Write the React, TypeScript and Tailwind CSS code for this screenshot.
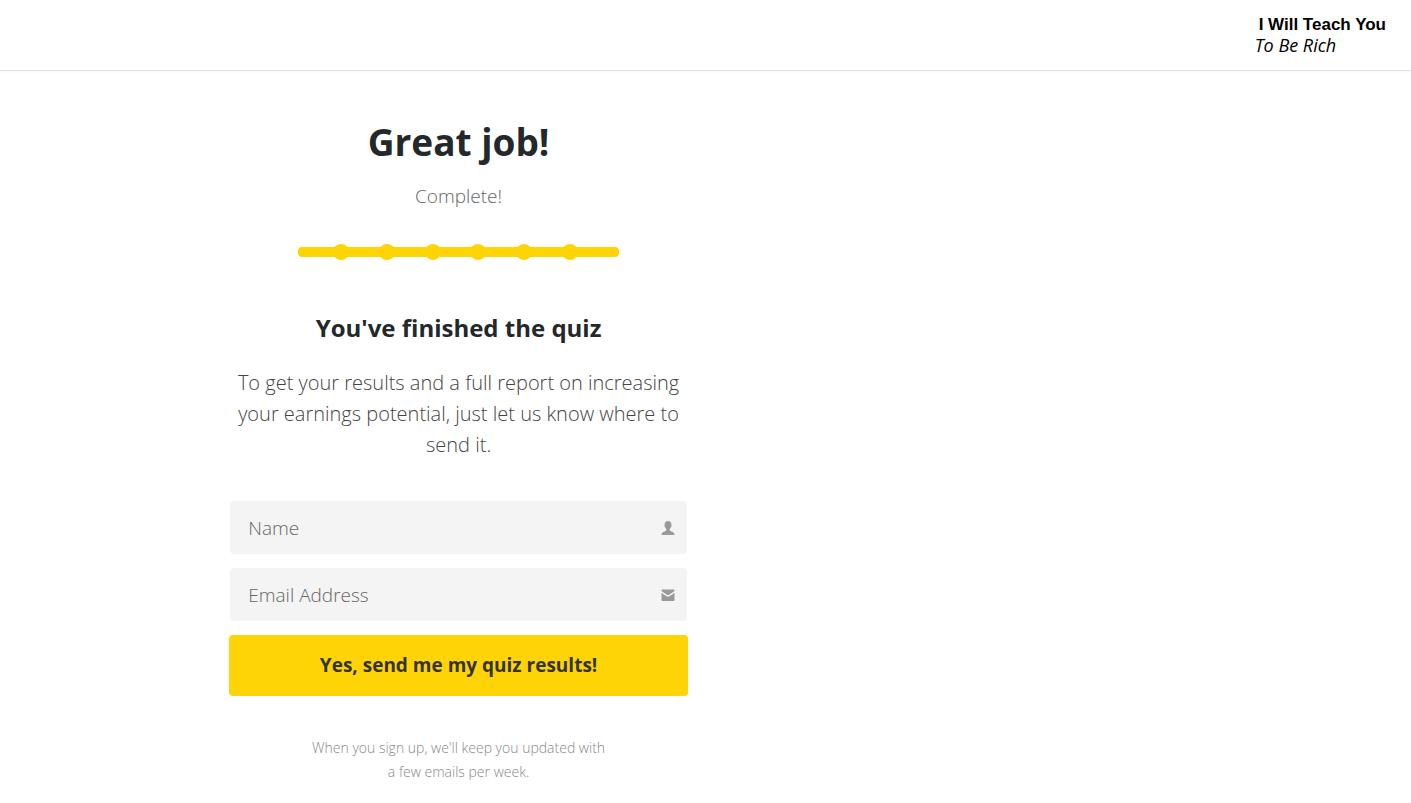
import { useState } from "react";

const steps = [1, 2, 3, 4, 5, 6, 7];

function UserIcon() {
  return (
    <svg viewBox="0 0 14 14" className="h-3.5 w-3.5" fill="#999999" aria-hidden="true">
      <path d="M7 0C4.900 0 3.600 1.400 3.600 3.400c0 .5 0 .7.1 1-.4.2-.3 1.200.3 1.500.3 1 .7 1.700 1.300 2.200v1.200c-.3.8-1.300 1-2.400 1.400C1.400 11.300.6 11.900.5 14h13c-.1-2.100-.9-2.700-2.400-3.300-1.100-.4-2.100-.6-2.400-1.400V8.100c.6-.5 1-1.200 1.300-2.200.6-.3.700-1.300.3-1.500.1-.3.1-.5.1-1C10.400 1.400 9.100 0 7 0z" />
    </svg>
  );
}

function MailIcon() {
  return (
    <svg viewBox="0 0 14 14" className="h-3.5 w-3.5" aria-hidden="true">
      <rect x="0.5" y="1.500" width="13" height="11.500" rx="1" fill="#999999" />
      <path d="M0 3.700L5.900 7.600Q7 8.300 8.100 7.600L14 3.700" fill="none" stroke="#f4f4f4" strokeWidth="1.500" />
    </svg>
  );
}

function Header() {
  return (
    <header className="flex h-[71px] items-start justify-end border-b border-[#e3e3e3] px-[25px] pt-[15px] shadow-xs">
      <a href="#" className="flex flex-col text-black">
        <span className="pl-1 font-['Liberation_Sans',sans-serif] text-[17px] leading-5 font-bold">
          I Will Teach You
        </span>
        <span className="text-lg leading-5 italic">To Be Rich</span>
      </a>
    </header>
  );
}

function ProgressBar() {
  return (
    <div
      role="progressbar"
      aria-valuenow={100}
      aria-label="Quiz progress"
      className="mx-auto grid h-2.5 w-[35%] grid-cols-7 rounded-[4px] bg-[#ffd406]"
    >
      {steps.map((step) => (
        <div key={step} className="flex h-2.5 items-center justify-end last:hidden">
          <span className="-mr-[5px] h-4 w-4 shrink-0 rounded-full bg-[#ffd406]" />
        </div>
      ))}
    </div>
  );
}

export default function App() {
  const [name, setName] = useState("");
  const [email, setEmail] = useState("");

  const onSubmit = (e: React.FormEvent<HTMLFormElement>) => {
    e.preventDefault();
  };

  return (
    <div className="bg-white font-['Open_Sans',sans-serif] text-[#23282a]">
      <Header />
      <main className="w-[65%] pt-[47px] pb-5 text-center">
        <h1 className="text-[37px] leading-[48px] font-bold">Great job!</h1>
        <p className="mt-4 mb-[37px] text-[19px] leading-7 font-light text-[#666666]">Complete!</p>
        <ProgressBar />

        <div className="mx-auto mt-[55px] w-1/2">
          <h2 className="text-2xl leading-8 font-bold">You've finished the quiz</h2>
          <p className="mt-[23px] text-xl leading-[31px] font-light text-[#444444]">
            To get your results and a full report on increasing your earnings potential, just let us know where to
            send it.
          </p>

          <form className="mt-[41px] flex flex-col gap-3.5" onSubmit={onSubmit}>
            <label className="mx-px flex h-[53px] items-center rounded-[4px] bg-[#f4f4f4] pr-3 pl-[18px]">
              <input
                name="name"
                type="text"
                aria-label="Name"
                placeholder="Name"
                value={name}
                onChange={(e) => setName(e.target.value)}
                className="min-w-0 flex-1 bg-transparent text-[19px] leading-7 font-light outline-none placeholder:text-[#666666]"
              />
              <UserIcon />
            </label>
            <label className="mx-px flex h-[53px] items-center rounded-[4px] bg-[#f4f4f4] pr-3 pl-[18px]">
              <input
                name="email"
                type="email"
                aria-label="Email Address"
                placeholder="Email Address"
                value={email}
                onChange={(e) => setEmail(e.target.value)}
                className="min-w-0 flex-1 bg-transparent text-[19px] leading-7 font-light outline-none placeholder:text-[#666666]"
              />
              <MailIcon />
            </label>
            <button type="submit" className="h-[61px] rounded-[4px] bg-[#ffd406] text-[19px] font-bold text-[#333333]">
              Yes, send me my quiz results!
            </button>
          </form>

          <p className="mx-auto mt-10 w-[300px] text-sm leading-6 font-light text-[#888888]">
            When you sign up, we'll keep you updated with a few emails per week.
          </p>
        </div>
      </main>
    </div>
  );
}
